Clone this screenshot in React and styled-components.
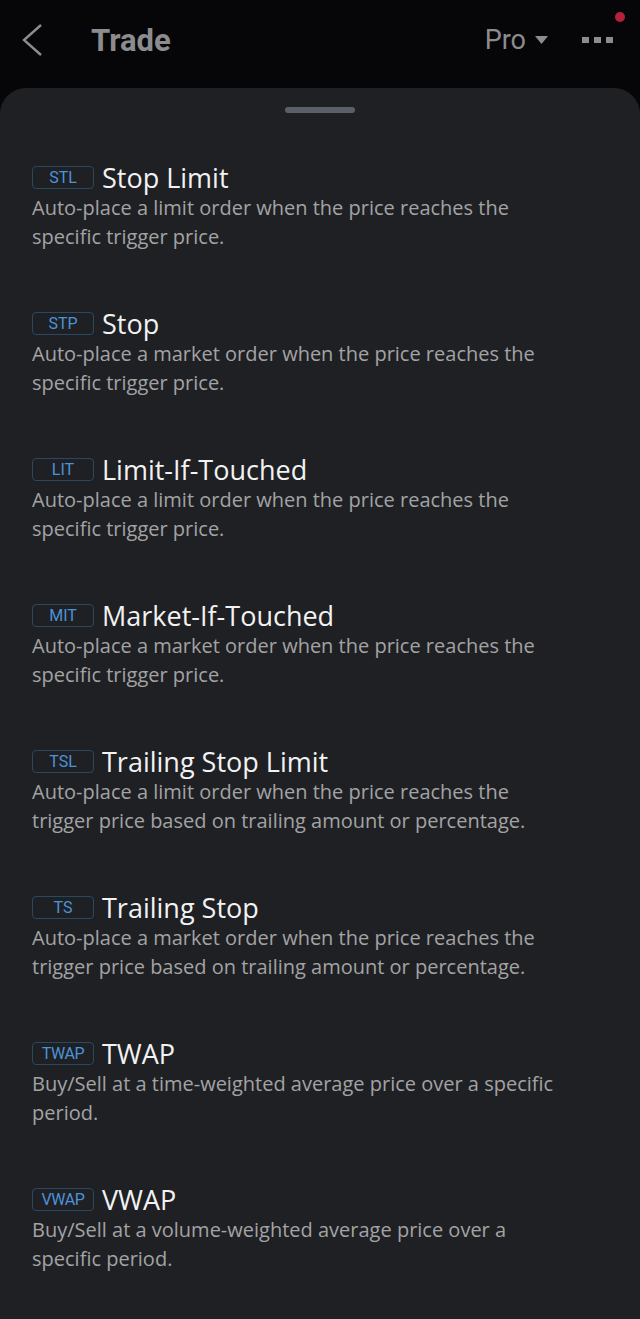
import React from "react";
import styled, { createGlobalStyle } from "styled-components";

const Global = createGlobalStyle`
  html, body {
    margin: 0;
    padding: 0;
    background: #060609;
  }
  body {
    font-family: "Open Sans", "Lato", sans-serif;
  }
`;

const Page = styled.div`
  width: 640px;
  min-height: 1319px;
  background: #060609;
  display: flex;
  flex-direction: column;
`;

const Header = styled.header`
  height: 88px;
  display: flex;
  align-items: center;
  padding: 0 0 0 20px;
  position: relative;
`;

const Back = styled.button`
  background: none;
  border: 0;
  padding: 0;
  width: 26px;
  height: 34px;
  display: flex;
  align-items: center;
  margin-top: -8px;
`;

const Title = styled.h1`
  margin: -8px 0 0 45px;
  font-family: "Roboto", sans-serif;
  font-weight: 700;
  font-size: 31px;
  color: #8c8c8e;
  flex: 1;
`;

const ProBtn = styled.div`
  display: flex;
  align-items: center;
  gap: 9px;
  font-family: "Roboto", sans-serif;
  font-size: 27px;
  color: #8c8c8e;
  margin-top: -8px;
  margin-right: 34px;
`;

const Dots = styled.div`
  display: flex;
  gap: 5px;
  margin-top: -8px;
  margin-right: 27px;
  span {
    width: 7px;
    height: 6px;
    background: #8c8c8e;
    display: block;
  }
`;

const RedDot = styled.span`
  position: absolute;
  right: 15px;
  top: 12px;
  width: 10px;
  height: 10px;
  border-radius: 50%;
  background: #b3213a;
`;

const Sheet = styled.main`
  flex: 1;
  background: #1f2023;
  border-radius: 26px 26px 0 0;
  padding: 19px 0 30px;
  display: flex;
  flex-direction: column;
`;

const Handle = styled.div`
  width: 70px;
  height: 6px;
  border-radius: 3px;
  background: #5b5f69;
  align-self: center;
`;

const List = styled.ul`
  list-style: none;
  margin: 48px 0 0;
  padding: 0 32px;
  display: flex;
  flex-direction: column;
  gap: 56px;
`;

const Item = styled.li`
  display: flex;
  flex-direction: column;
`;

const Row = styled.div`
  display: flex;
  align-items: center;
  gap: 8px;
  height: 32px;
`;

const Badge = styled.span`
  width: 62px;
  height: 23px;
  box-sizing: border-box;
  border: 1px solid #2b4860;
  border-radius: 4px;
  color: #4b93da;
  font-family: "Roboto", sans-serif;
  font-size: 16px;
  display: flex;
  align-items: center;
  justify-content: center;
  letter-spacing: ${(p) => (p.$wide ? "-0.4px" : "0")};
`;

const Name = styled.span`
  font-size: 27px;
  color: #f2f2f2;
  font-weight: 400;
`;

const Desc = styled.p`
  margin: 0;
  font-size: 20px;
  line-height: 29px;
  color: #a3a3a5;
`;

const orders = [
  { code: "STL", name: "Stop Limit", desc: ["Auto-place a limit order when the price reaches the", "specific trigger price."] },
  { code: "STP", name: "Stop", desc: ["Auto-place a market order when the price reaches the", "specific trigger price."] },
  { code: "LIT", name: "Limit-If-Touched", desc: ["Auto-place a limit order when the price reaches the", "specific trigger price."] },
  { code: "MIT", name: "Market-If-Touched", desc: ["Auto-place a market order when the price reaches the", "specific trigger price."] },
  { code: "TSL", name: "Trailing Stop Limit", desc: ["Auto-place a limit order when the price reaches the", "trigger price based on trailing amount or percentage."] },
  { code: "TS", name: "Trailing Stop", desc: ["Auto-place a market order when the price reaches the", "trigger price based on trailing amount or percentage."] },
  { code: "TWAP", name: "TWAP", desc: ["Buy/Sell at a time-weighted average price over a specific", "period."] },
  { code: "VWAP", name: "VWAP", desc: ["Buy/Sell at a volume-weighted average price over a", "specific period."] },
];

export default function App() {
  return (
    <Page>
      <Global />
      <Header>
        <Back aria-label="back">
          <svg width="24" height="34" viewBox="0 0 24 34">
            <path d="M21 2 L4 17 L21 32" fill="none" stroke="#8c8c8e" strokeWidth="2.4" />
          </svg>
        </Back>
        <Title>Trade</Title>
        <ProBtn>
          Pro
          <svg width="13" height="9" viewBox="0 0 13 9">
            <path d="M0 0 H13 L6.5 8 Z" fill="#8c8c8e" />
          </svg>
        </ProBtn>
        <Dots>
          <span />
          <span />
          <span />
        </Dots>
        <RedDot />
      </Header>
      <Sheet>
        <Handle />
        <List>
          {orders.map((o) => (
            <Item key={o.code}>
              <Row>
                <Badge $wide={o.code.length > 3}>{o.code}</Badge>
                <Name>{o.name}</Name>
              </Row>
              <Desc>
                {o.desc[0]}
                <br />
                {o.desc[1]}
              </Desc>
            </Item>
          ))}
        </List>
      </Sheet>
    </Page>
  );
}
